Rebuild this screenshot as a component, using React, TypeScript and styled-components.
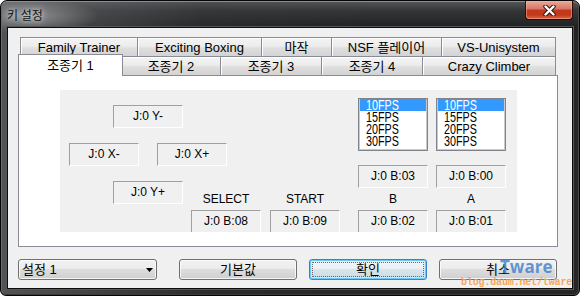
import React from "react";
import styled, { createGlobalStyle, css } from "styled-components";

const UI_FONT = `"Liberation Sans", "Noto Sans CJK KR", sans-serif`;

const GlobalStyle = createGlobalStyle`
  html, body {
    margin: 0;
    padding: 0;
    background: #ffffff;
  }
  body {
    width: 580px;
    height: 296px;
    overflow: hidden;
    font-family: ${UI_FONT};
  }
  *, *::before, *::after { box-sizing: border-box; }
`;

const Window = styled.div`
  position: relative;
  width: 580px;
  height: 296px;
  display: flex;
  flex-direction: column;
  padding: 0 7px 7px 7px;
  border: 1px solid #050505;
  border-radius: 7px 7px 6px 6px;
  overflow: hidden;
  background:
    radial-gradient(ellipse 70px 18px at 28px 15px, rgba(185,185,185,0.6), rgba(185,185,185,0) 100%),
    linear-gradient(to right, rgba(110,113,116,0.6) 0%, rgba(60,62,64,0.25) 35%, rgba(0,0,0,0) 65%),
    linear-gradient(to bottom, #55585b 0px, #333537 10px, #1f2021 27px, #262728 40px, #262728 100%);
  box-shadow: inset 0 1px 0 #8c8f92, inset 1px 0 0 #6a6c6e, inset -1px 0 0 #4a4c4e, inset 0 -1px 0 #3a3b3c;
`;

const TitleBar = styled.div`
  height: 27px;
  display: flex;
  align-items: flex-start;
  justify-content: space-between;
  margin: 0 -1px;
`;

const Title = styled.div`
  margin-top: 7px;
  font: 12px/14px "Noto Sans CJK KR", sans-serif;
  color: #141414;
  text-shadow: 0 0 5px rgba(255, 255, 255, 0.85), 0 0 9px rgba(255, 255, 255, 0.5);
`;

const CloseButton = styled.div`
  width: 48px;
  height: 19px;
  display: flex;
  align-items: center;
  justify-content: center;
  border: 1px solid #2e0c05;
  border-top: none;
  border-radius: 0 0 4px 4px;
  background: linear-gradient(
    to bottom,
    #e9a898 0%,
    #d8796a 42%,
    #c3391c 52%,
    #c2391d 78%,
    #dc6a45 100%
  );
  box-shadow: inset 0 0 0 1px rgba(255, 190, 170, 0.45);
`;

const Client = styled.div`
  flex: 1;
  display: flex;
  flex-direction: column;
  padding: 9px 0 0 10px;
  background: #f0f0f0;
  box-shadow: 0 0 0 1px #0c0c0c, 0 0 0 2px #55585a;
`;

const TabControl = styled.div`
  width: 540px;
  display: flex;
  flex-direction: column;
`;

const TabRow = styled.div`
  display: flex;
  height: 19px;
  padding-left: 2px;
`;

const Tab = styled.div<{ $w: number; $last?: boolean; $active?: boolean }>`
  flex: none;
  width: ${(p) => p.$w}px;
  height: 19px;
  display: flex;
  align-items: center;
  justify-content: center;
  border: 1px solid #898c95;
  border-bottom: none;
  border-right-width: ${(p) => (p.$last ? 1 : 0)}px;
  background: linear-gradient(to bottom, #f4f4f4 0%, #ececec 45%, #dfdfdf 55%, #d3d3d3 100%);
  box-shadow: inset 1px 1px 0 #ffffff;
  font: 13px/15px ${UI_FONT};
  color: #000;
  white-space: nowrap;
  ${(p) =>
    p.$active &&
    css`
      position: relative;
      z-index: 1;
      width: ${p.$w + 4}px;
      height: 22px;
      margin: -2px -2px -1px -2px;
      padding-bottom: 1px;
      border-right-width: 1px;
      background: #ffffff;
      box-shadow: none;
    `}
`;

const Panel = styled.div`
  width: 540px;
  height: 172px;
  border: 1px solid #898c95;
  background: #ffffff;
  padding: 14px 0 0 41px;
`;

const KeyPane = styled.div`
  width: 457px;
  height: 142px;
  background: #f0f0f0;
  display: grid;
  grid-template: 100% / 100%;
  overflow: hidden;
`;

const Dpad = styled.div`
  grid-area: 1 / 1;
  align-self: start;
  justify-self: start;
  padding: 15px 0 0 9px;
  display: flex;
  flex-direction: column;
  align-items: center;
  gap: 15px;
`;

const DpadRow = styled.div`
  display: flex;
  gap: 18px;
`;

const ButtonColumns = styled.div`
  grid-area: 1 / 1;
  align-self: start;
  justify-self: start;
  height: 143px;
  padding-left: 131px;
  display: flex;
`;

const KeyColumn = styled.div<{ $ml?: number }>`
  width: 70px;
  margin-left: ${(p) => p.$ml ?? 0}px;
  display: flex;
  flex-direction: column;
  justify-content: flex-end;
`;

const KeyBox = styled.div`
  width: 70px;
  height: 23px;
  flex: none;
  border-top: 1px solid #a0a0a0;
  border-left: 1px solid #a0a0a0;
  border-right: 1px solid #ffffff;
  border-bottom: 1px solid #ffffff;
  font: 12px/20px ${UI_FONT};
  color: #000;
  text-align: center;
  white-space: nowrap;
`;

const KeyLabel = styled.div`
  height: 22px;
  padding-top: 4px;
  font: 12px/15px ${UI_FONT};
  color: #000;
  text-align: center;
`;

const ListBox = styled.div`
  width: 70px;
  height: 53px;
  flex: none;
  margin-bottom: 14px;
  border: 1px solid #80838a;
  box-shadow: inset 0 0 0 1px #c9c9c9;
  background: #ffffff;
  padding: 0 1px;
  display: flex;
  flex-direction: column;
`;

const ListItem = styled.div<{ $selected?: boolean }>`
  height: 12px;
  flex: none;
  display: flex;
  align-items: center;
  padding-left: 6px;
  background: ${(p) => (p.$selected ? "#3399ff" : "transparent")};
  color: ${(p) => (p.$selected ? "#ffffff" : "#000000")};
  font: 14px/12px ${UI_FONT};
`;

const ItemText = styled.span`
  display: block;
  font: 14px/12px ${UI_FONT};
  transform: scaleX(0.77);
  transform-origin: left center;
  white-space: nowrap;
`;

const BottomRow = styled.div`
  display: flex;
  height: 21px;
  margin-top: 12px;
`;

const buttonFace = css`
  border: 1px solid #707070;
  border-radius: 3px;
  background: linear-gradient(to bottom, #f2f2f2 0%, #ebebeb 50%, #dddddd 50%, #cfcfcf 100%);
  box-shadow: inset 0 0 0 1px rgba(252, 252, 252, 0.85);
`;

const Combo = styled.div`
  ${buttonFace};
  width: 139px;
  display: flex;
  align-items: center;
  justify-content: space-between;
  padding: 0 3px 0 3px;
  font: 13px/15px ${UI_FONT};
  color: #000;
`;

const PushButton = styled.div<{ $ml: number; $default?: boolean }>`
  ${buttonFace};
  position: relative;
  width: 118px;
  margin-left: ${(p) => p.$ml}px;
  display: flex;
  align-items: center;
  justify-content: center;
  font: 13px/15px ${UI_FONT};
  color: #000;
  ${(p) =>
    p.$default &&
    css`
      border-color: #2f86cf;
      background: linear-gradient(to bottom, #f3f7f9 0%, #e9eff3 50%, #d8e5ec 50%, #c9dbe5 100%);
      box-shadow: inset 0 0 0 1px #6ccbf4, inset 0 0 0 2px rgba(200, 238, 255, 0.6);
      &::after {
        content: "";
        position: absolute;
        inset: 2px;
        border: 1px dotted #6a6a6a;
        border-radius: 1px;
      }
    `}
`;

const WatermarkLogo = styled.div`
  position: absolute;
  left: 499px;
  top: 257px;
  font: 700 17px/17px "Open Sans", "DejaVu Sans", sans-serif;
  color: rgba(64, 128, 204, 0.82);
  pointer-events: none;
`;

const WatermarkUrl = styled.div`
  position: absolute;
  left: 460px;
  top: 276px;
  font: 700 10px/11px "Liberation Mono", monospace;
  letter-spacing: -0.15px;
  color: rgba(244, 160, 80, 0.95);
  pointer-events: none;
`;

const row1 = [
  { label: "Family Trainer", w: 117 },
  { label: "Exciting Boxing", w: 124 },
  { label: "마작", w: 70 },
  { label: "NSF 플레이어", w: 110 },
  { label: "VS-Unisystem", w: 115 },
];

const row2 = [
  { label: "조종기 1", w: 101 },
  { label: "조종기 2", w: 99 },
  { label: "조종기 3", w: 101 },
  { label: "조종기 4", w: 101 },
  { label: "Crazy Climber", w: 134 },
];

const fps = ["10FPS", "15FPS", "20FPS", "30FPS"];

const FpsList = () => (
  <ListBox>
    {fps.map((f, i) => (
      <ListItem key={f} $selected={i === 0}>
        <ItemText>{f}</ItemText>
      </ListItem>
    ))}
  </ListBox>
);

export default function App() {
  return (
    <>
      <GlobalStyle />
      <Window>
        <TitleBar>
          <Title>키 설정</Title>
          <CloseButton>
            <svg width="13" height="11" viewBox="0 0 13 11">
              <path d="M2.5 1.5 L10.5 9.5 M10.5 1.5 L2.5 9.5" stroke="#3a1710" strokeWidth="4.4" strokeLinecap="round" />
              <path d="M2.5 1.5 L10.5 9.5 M10.5 1.5 L2.5 9.5" stroke="#ffffff" strokeWidth="2.4" strokeLinecap="round" />
            </svg>
          </CloseButton>
        </TitleBar>
        <Client>
          <TabControl>
            <TabRow>
              {row1.map((t, i) => (
                <Tab key={t.label} $w={t.w} $last={i === row1.length - 1}>
                  {t.label}
                </Tab>
              ))}
            </TabRow>
            <TabRow>
              {row2.map((t, i) => (
                <Tab key={t.label} $w={t.w} $last={i === row2.length - 1} $active={i === 0}>
                  {t.label}
                </Tab>
              ))}
            </TabRow>
            <Panel>
              <KeyPane>
                <Dpad>
                  <KeyBox>J:0 Y-</KeyBox>
                  <DpadRow>
                    <KeyBox>J:0 X-</KeyBox>
                    <KeyBox>J:0 X+</KeyBox>
                  </DpadRow>
                  <KeyBox>J:0 Y+</KeyBox>
                </Dpad>
                <ButtonColumns>
                  <KeyColumn>
                    <KeyLabel>SELECT</KeyLabel>
                    <KeyBox>J:0 B:08</KeyBox>
                  </KeyColumn>
                  <KeyColumn $ml={9}>
                    <KeyLabel>START</KeyLabel>
                    <KeyBox>J:0 B:09</KeyBox>
                  </KeyColumn>
                  <KeyColumn $ml={18}>
                    <FpsList />
                    <KeyBox>J:0 B:03</KeyBox>
                    <KeyLabel>B</KeyLabel>
                    <KeyBox>J:0 B:02</KeyBox>
                  </KeyColumn>
                  <KeyColumn $ml={8}>
                    <FpsList />
                    <KeyBox>J:0 B:00</KeyBox>
                    <KeyLabel>A</KeyLabel>
                    <KeyBox>J:0 B:01</KeyBox>
                  </KeyColumn>
                </ButtonColumns>
              </KeyPane>
            </Panel>
          </TabControl>
          <BottomRow>
            <Combo>
              <span>설정 1</span>
              <svg width="7" height="4" viewBox="0 0 7 4">
                <polygon points="0,0 7,0 3.5,4" fill="#000" />
              </svg>
            </Combo>
            <PushButton $ml={22}>기본값</PushButton>
            <PushButton $ml={12} $default>
              확인
            </PushButton>
            <PushButton $ml={12}>취소</PushButton>
          </BottomRow>
        </Client>
        <WatermarkLogo>Tware</WatermarkLogo>
        <WatermarkUrl>blog.daum.net/tware</WatermarkUrl>
      </Window>
    </>
  );
}
